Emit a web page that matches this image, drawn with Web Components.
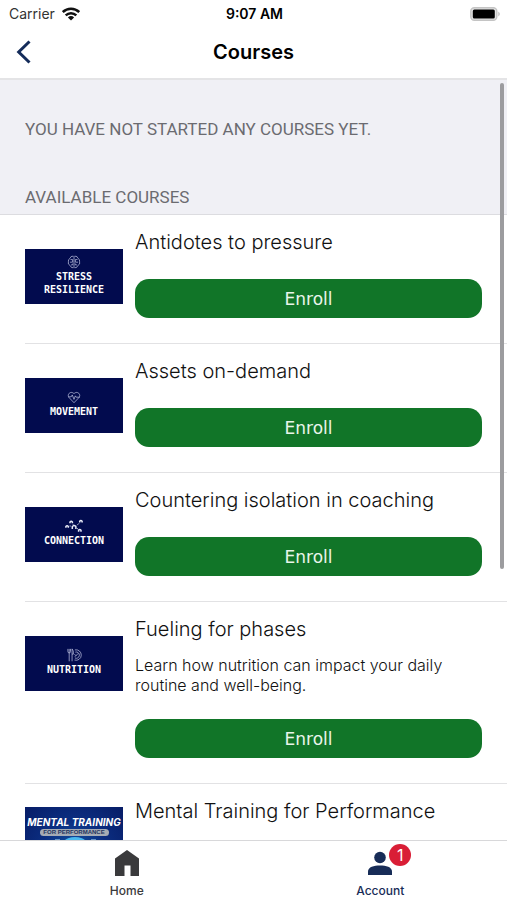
<!DOCTYPE html>
<html lang="en">
<head>
<meta charset="utf-8">
<meta name="viewport" content="width=device-width, initial-scale=1">
<title>Courses</title>
<style>
html, body { height: 100%; margin: 0; }
body { font-family: Inter, "Liberation Sans", sans-serif; color: #000; background: #fff; overflow: hidden; }
</style>
</head>
<body>
<courses-app></courses-app>
<script>
const define = (name, html, setup) => customElements.define(name, class extends HTMLElement {
  connectedCallback() {
    if (this.shadowRoot) return;
    const t = document.createElement('template');
    t.innerHTML = '<style>*{box-sizing:border-box}</style>' + html;
    this.attachShadow({ mode: 'open' }).append(t.content.cloneNode(true));
    if (setup) setup(this, this.shadowRoot);
  }
});

define('status-bar', `
<style>
:host { display: grid; grid-template-columns: 1fr auto 1fr; align-items: center; height: 28px; padding: 0 7px 0 9px; font-size: 14px; line-height: 20px; }
.carrier { display: flex; align-items: center; gap: 7px; color: #333; }
.time { font-weight: 600; }
.battery { justify-self: end; }
svg { display: block; }
</style>
<span class="carrier">Carrier
<svg width="18" height="14" viewBox="0 0 18 14" aria-hidden="true"><g fill="none" stroke="#111" stroke-width="2.5"><path d="M.8 5a11.8 11.8 0 0 1 16.400 0"/><path d="M3.700 8.300a7.600 7.600 0 0 1 10.600 0"/></g><path d="M5.900 10.500a4.600 4.600 0 0 1 6.200 0L9 13.600z" fill="#111"/></svg></span>
<span class="time">9:07 AM</span>
<svg class="battery" width="30" height="14" viewBox="0 0 30 14" aria-hidden="true"><rect x=".8" y=".8" width="26" height="12.4" rx="3.5" fill="#e4e4e4" stroke="#c4c4c4" stroke-width="1.4"/><rect x="2.800" y="2.600" width="22" height="8.800" rx="1.500"/><path d="M28.300 4.600q3 2.400 0 4.800z" fill="#bbb"/></svg>`);

define('nav-header', `
<style>
:host { display: grid; grid-template-columns: 1fr auto 1fr; align-items: center; height: 52px; padding: 0 16px 2px; border-bottom: 2px solid #e4e4e6; }
button { justify-self: start; display: flex; background: none; border: 0; padding: 0; }
h1 { margin: 0; font-size: 20px; line-height: 24px; font-weight: 600; }
</style>
<button aria-label="Back"><svg width="16" height="24" viewBox="0 0 16 24"><path d="M13.500 1.500L2.700 12l10.800 10.500" fill="none" stroke="#142c5a" stroke-width="3"/></svg></button>
<h1><slot></slot></h1>`);

define('section-label', `
<style>
:host { display: block; padding: 39px 25px 0; background: #f0f0f5; color: #6b6b70; }
h2 { margin: 0; font: 400 17px/20px Roboto, sans-serif; text-transform: uppercase; }
:host([last]) { padding: 48px 25px 7px; border-bottom: 1px solid #dcdce0; }
</style>
<h2><slot></slot></h2>`);

const icons = {
  brain: '<path d="M8 1.2v13.6M7.2 1.3Q4 1 3.5 3.8Q1 5 1.6 7.8Q.6 10.8 3.6 12Q4.6 15 7.2 14.6M8.8 1.3Q12 1 12.5 3.8Q15 5 14.4 7.8Q15.4 10.8 12.4 12Q11.4 15 8.8 14.6M4 5.2h2.4v3H3.4M4.5 11.3h2V9.8M12 5.2H9.6v3h3M11.5 11.3h-2V9.8"/>',
  heart: '<path d="M8 14.5L2.4 8.7C-.8 4.8 4.8.4 8 4.3C11.2.4 16.8 4.8 13.6 8.7zM1.5 7.8h3.3L6 5.6l2 5.1 1.5-4 1 1.5h4"/>',
  nodes: '<g stroke-width="1.500" stroke="#e6e9f6"><path d="M7.300 10V7.600q1.700-2.400 3.600 0V10M.9 8.700V7.500q1.200-1.400 2.400 0v1.200M5 4.200V3q1.200-1.400 2.400 0v1.200M14.700 3.500V2.200q1.200-1.400 2.400 0v1.300M13.600 12.700v-1.400q1.200-1.400 2.400 0v1.400"/><path d="M4.500 7h1.300M8 5.300l.6 1M12 6.300l2-2M12 9.300l1.300 1" stroke-width=".8"/></g>',
  food: '<path d="M1 1v3q0 1.600 1.500 1.600Q4 5.600 4 4V1M2.500 1v14.200M5.800 1v14.200M5.800 1q2 2 1.500 6H5.800M9 2.200A6 6 0 1 1 8.600 13.800M9.500 4.700A3.600 3.600 0 1 1 9 11.400M9 10l4-4M8.500 7l2 2"/>'
};
define('course-thumb', `
<style>
:host { display: flex; align-items: center; width: 98px; height: 77px; }
div { width: 100%; height: 55px; padding-bottom: 3px; display: flex; flex-direction: column; align-items: center; justify-content: center; background: #020b4e; color: #fff; font: bold 10px/13px "DejaVu Sans Mono", monospace; text-align: center; white-space: pre-line; }
svg { flex: none; margin-bottom: 1px; fill: none; stroke: #c5cae6; stroke-width: .8; }
</style>
<div><svg width="18" height="14" aria-hidden="true"></svg><span></span></div>`, (el, root) => {
  const i = el.getAttribute('icon'), svg = root.querySelector('svg');
  svg.setAttribute('viewBox', i === 'nodes' ? '0 0 18 14' : '0 0 16 16');
  svg.innerHTML = icons[i];
  root.querySelector('span').textContent = el.getAttribute('label').replace('|', '\n');
});

define('training-poster', `
<style>
:host { display: grid; grid-template-columns: 100%; grid-template-rows: auto auto 1fr; justify-items: center; width: 98px; height: 77px; padding-top: 8px; background: radial-gradient(circle at 50% 60%, #1657a4, #0b2d80 50%, #071c66); color: #fff; overflow: hidden; }
b { font: italic 700 10px/14px Inter, sans-serif; white-space: nowrap; }
span { width: 69px; border-radius: 4px; background: #a5abb4; color: #23345f; font: bold 6px/7px "Liberation Sans", sans-serif; text-align: center; }
</style>
<b>MENTAL TRAINING</b><span>FOR PERFORMANCE</span>
<svg width="98" height="46" viewBox="0 0 98 46" aria-hidden="true"><circle cx="50" cy="19" r="18" fill="#49b8ee"/><path d="M38 13q5-9 12-6q9-4 14 8M43 9l7 8 8-9M24 7v6h8M76 7v6h-8M30 4h5M66 4h5" fill="none" stroke="#b8eaff"/></svg>`);

define('course-row', `
<style>
:host { display: grid; grid-template-columns: 98px minmax(0, 1fr); column-gap: 12px; margin-left: 25px; padding: 0 25px 25px 0; border-bottom: 1px solid #e2e2e4; }
.thumb { padding-top: 23px; }
.body { padding-top: 13px; }
h3 { margin: 0; font: 300 20px/28px Inter, sans-serif; color: #111; }
p { margin: 12px 0 0; font: 300 16px/20px Inter, sans-serif; color: #111; }
button { display: block; width: 100%; height: 39px; margin-top: 23px; padding: 0; border: 0; border-radius: 14px; background: #117528; color: #e9f5ea; font: 400 17px/20px "DejaVu Sans", sans-serif; }
p + button { margin-top: 24px; }
</style>
<div class="thumb"><slot name="thumb"></slot></div>
<div class="body"><h3><slot></slot></h3><button>Enroll</button></div>`, (el, root) => {
  const text = el.getAttribute('description');
  if (text) {
    const p = document.createElement('p');
    p.textContent = text;
    root.querySelector('h3').after(p);
  }
});

define('tab-item', `
<style>
:host { display: block; flex: 1; color: #3a3a3c; }
a { display: flex; flex-direction: column; align-items: center; gap: 5px; padding-top: 7px; color: inherit; text-decoration: none; font-size: 12px; line-height: 16px; font-weight: 500; }
.icon { position: relative; width: 32px; height: 30px; display: flex; align-items: center; justify-content: center; }
.badge { position: absolute; left: 25px; top: -4px; width: 22px; height: 22px; border-radius: 50%; background: #d91e36; color: #fff; font-size: 16px; line-height: 22px; font-weight: 400; text-align: center; }
:host([active]) { color: #172c57; }
</style>
<a href="#"><span class="icon"><slot name="icon"></slot></span><slot></slot></a>`, (el, root) => {
  const n = el.getAttribute('badge');
  if (n) {
    const b = document.createElement('span');
    b.className = 'badge';
    b.textContent = n;
    root.querySelector('.icon').append(b);
  }
});

define('tab-bar', `
<style>
:host { display: flex; height: 60px; background: #fff; border-top: 1px solid #d8d8da; }
svg { display: block; }
</style>
<tab-item>Home<svg slot="icon" width="24" height="26" viewBox="0 0 24 26"><path d="M12 0L24 8.500V26h-8.500V15.500h-6V26H0V8.500z" fill="#3a3a3c"/></svg></tab-item>
<tab-item active badge="1">Account<svg slot="icon" width="24" height="26" viewBox="0 0 24 26"><circle cx="12" cy="7.500" r="5.800" fill="#172c57"/><path d="M0 25v-3.500C0 17 6 15.500 12 15.500s12 1.500 12 6V25z" fill="#172c57"/></svg></tab-item>`);

define('courses-app', `
<style>
:host { display: flex; flex-direction: column; height: 100%; }
.viewport { position: relative; flex: 1; min-height: 0; overflow: hidden; }
.scroll { position: absolute; top: 3px; right: 3px; width: 4px; height: 64%; border-radius: 2px; background: #9c9c9f; }
</style>
<status-bar></status-bar>
<nav-header>Courses</nav-header>
<main class="viewport">
<section-label>You have not started any courses yet.</section-label>
<section-label last>Available courses</section-label>
<course-row>Antidotes to pressure<course-thumb slot="thumb" icon="brain" label="STRESS|RESILIENCE"></course-thumb></course-row>
<course-row>Assets on-demand<course-thumb slot="thumb" icon="heart" label="MOVEMENT"></course-thumb></course-row>
<course-row>Countering isolation in coaching<course-thumb slot="thumb" icon="nodes" label="CONNECTION"></course-thumb></course-row>
<course-row description="Learn how nutrition can impact your daily routine and well-being.">Fueling for phases<course-thumb slot="thumb" icon="food" label="NUTRITION"></course-thumb></course-row>
<course-row description="In this course you will learn how to train the mind.">Mental Training for Performance<training-poster slot="thumb"></training-poster></course-row>
<div class="scroll"></div>
</main>
<tab-bar></tab-bar>`);
</script>
</body>
</html>
